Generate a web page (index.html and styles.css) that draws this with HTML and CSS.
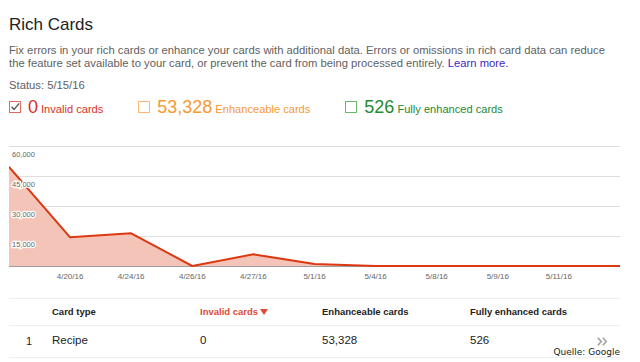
FILE: index.html
```html
<!DOCTYPE html>
<html lang="en">

<head>
    <meta charset="UTF-8">
    <meta name="viewport" content="width=device-width, initial-scale=1.0">
    <title>Rich Cards</title>
    <link rel="stylesheet" href="styles.css">
</head>

<body>
    <!-- Title and intro -->
    <h1 class="title">Rich Cards</h1>
    <p class="intro">Fix errors in your rich cards or enhance your cards with additional data. Errors or omissions in rich card data can reduce the feature set available to your card, or prevent the card from being processed entirely. <a href="#">Learn more.</a></p>
    <p class="status">Status: 5/15/16</p>

    <!-- Totals -->
    <div class="totals">
        <div class="total invalid">
            <svg class="box" width="12" height="12" viewBox="0 0 12 12">
                <rect x="0.5" y="0.5" width="11" height="11" fill="#fff" stroke="#e06a5e"/>
                <path d="M2.6 5.8 L5 8.4 L10.2 2.4" fill="none" stroke="#555" stroke-width="1.4"/>
            </svg>
            <span class="count">0</span>
            <span class="label">Invalid cards</span>
        </div>
        <div class="total enhanceable">
            <svg class="box" width="12" height="12" viewBox="0 0 12 12">
                <rect x="0.5" y="0.5" width="11" height="11" fill="#fff" stroke="#fbb675"/>
            </svg>
            <span class="count">53,328</span>
            <span class="label">Enhanceable cards</span>
        </div>
        <div class="total enhanced">
            <svg class="box" width="12" height="12" viewBox="0 0 12 12">
                <rect x="0.5" y="0.5" width="11" height="11" fill="#fff" stroke="#68b86a"/>
            </svg>
            <span class="count">526</span>
            <span class="label">Fully enhanced cards</span>
        </div>
    </div>

    <!-- Chart -->
    <div class="chart">
        <svg width="611" height="148" viewBox="0 0 611 148">
            <g class="grid">
                <line x1="0" y1="6.5" x2="611" y2="6.5"/>
                <line x1="0" y1="36.5" x2="611" y2="36.5"/>
                <line x1="0" y1="66.5" x2="611" y2="66.5"/>
                <line x1="0" y1="96.5" x2="611" y2="96.5"/>
            </g>
            <path class="area" d="M0 126 L0 27 L61.1 97.3 L122.2 93.3 L183.3 126 L244.4 114.3 L305.5 124 L366.6 126 L611 126 Z"/>
            <line class="axis" x1="0" y1="126.5" x2="611" y2="126.5"/>
            <polyline class="series" points="0,27 61.1,97.3 122.2,93.3 183.3,126 244.4,114.3 305.5,124 366.6,126 611,126"/>
            <g class="y-labels">
                <text x="3" y="16.5">60,000</text>
                <text x="3" y="46.5">45,000</text>
                <text x="3" y="76.5">30,000</text>
                <text x="3" y="106.5">15,000</text>
            </g>
            <g class="x-labels">
                <text x="61.1" y="139">4/20/16</text>
                <text x="122.2" y="139">4/24/16</text>
                <text x="183.3" y="139">4/26/16</text>
                <text x="244.4" y="139">4/27/16</text>
                <text x="305.5" y="139">5/1/16</text>
                <text x="366.6" y="139">5/4/16</text>
                <text x="427.7" y="139">5/8/16</text>
                <text x="488.8" y="139">5/9/16</text>
                <text x="549.9" y="139">5/11/16</text>
            </g>
        </svg>
    </div>

    <!-- Table -->
    <div class="table">
        <div class="row head">
            <div class="cell num"></div>
            <div class="cell">Card type</div>
            <div class="cell sorted">Invalid cards<svg class="arrow" width="8" height="6" viewBox="0 0 8 6"><path d="M0 0 H8 L4 6 Z"/></svg></div>
            <div class="cell">Enhanceable cards</div>
            <div class="cell">Fully enhanced cards</div>
        </div>
        <div class="row">
            <div class="cell num">1</div>
            <div class="cell">Recipe</div>
            <div class="cell">0</div>
            <div class="cell">53,328</div>
            <div class="cell last">
                <span>526</span>
                <svg class="more" width="11" height="9" viewBox="0 0 11 9">
                    <polyline points="0.8,0.8 4.3,4.5 0.8,8.2"/>
                    <polyline points="5.8,0.8 9.3,4.5 5.8,8.2"/>
                </svg>
            </div>
        </div>
    </div>

    <div class="credit">Quelle: Google</div>
</body>

</html>
```

FILE: styles.css
```css
body {
    margin: 0;
    padding: 0 20px 0 9px;
    font-family: 'Liberation Sans', Arial, sans-serif;
    background-color: #fff;
    color: #222;
}

.title {
    margin: 14px 0 0;
    font-size: 17px;
    line-height: 22px;
    font-weight: normal;
    color: #212121;
}

.intro {
    margin: 7.5px 0 0;
    font-size: 11.25px;
    line-height: 13px;
    color: #616161;
}

.intro a {
    display: inline-block;
    color: #3f1fc4;
    text-decoration: none;
}

.status {
    margin: 9px 0 0;
    font-size: 11.25px;
    line-height: 13px;
    color: #616161;
}

.totals {
    display: flex;
    margin-top: 5px;
    line-height: 20px;
}

.total {
    display: flex;
    align-items: baseline;
    margin-right: 35px;
}

.total .box {
    display: block;
    margin-right: 7px;
}

.total .count {
    font-size: 18px;
    margin-right: 3px;
}

.total .label {
    font-size: 11.1px;
}

.invalid {
    color: #d93025;
}

.enhanceable {
    color: #f59a2f;
}

.enhanced {
    color: #258a2f;
}

.chart {
    margin-top: 21px;
}

.chart svg {
    display: block;
}

.grid line {
    stroke: #dedede;
    stroke-width: 1.2;
}

.area {
    fill: #f5c4b8;
}

.axis {
    stroke: #9e9e9e;
    stroke-width: 1;
}

.series {
    fill: none;
    stroke: #dc3912;
    stroke-width: 2;
    stroke-linejoin: round;
}

.y-labels text {
    font-size: 7.5px;
    fill: #666;
    stroke: #fff;
    stroke-width: 2.5;
    paint-order: stroke;
}

.x-labels text {
    font-size: 8px;
    fill: #666;
    text-anchor: middle;
}

.table {
    margin-top: 10px;
}

.row {
    display: grid;
    grid-template-columns: 43px 148px 122px 148px 1fr;
    border-top: 1px solid #eee;
    height: 31px;
    font-size: 11.5px;
    line-height: 13px;
    color: #222;
}

.row .cell {
    padding-top: 8px;
}

.row:last-child {
    border-bottom: 1px solid #eee;
}

.row.head {
    height: 26px;
    font-size: 9.5px;
    font-weight: bold;
    line-height: 11px;
}

.row.head .cell {
    padding-top: 7.5px;
}

.cell.num {
    padding-left: 17px;
    font-size: 11px;
    position: relative;
    top: 1px;
}

.sorted {
    color: #dd4b39;
}

.arrow {
    margin-left: 2px;
    fill: #dd4b39;
}

.cell.last {
    display: flex;
    justify-content: space-between;
    padding-right: 12px;
}

.more {
    margin-top: 3px;
}

.more polyline {
    fill: none;
    stroke: #a0a0a0;
    stroke-width: 1.6;
}

.credit {
    position: absolute;
    top: 347px;
    right: 20px;
    font-family: 'DejaVu Sans', sans-serif;
    font-size: 9px;
    line-height: 11px;
    color: #1a1a1a;
}
```
